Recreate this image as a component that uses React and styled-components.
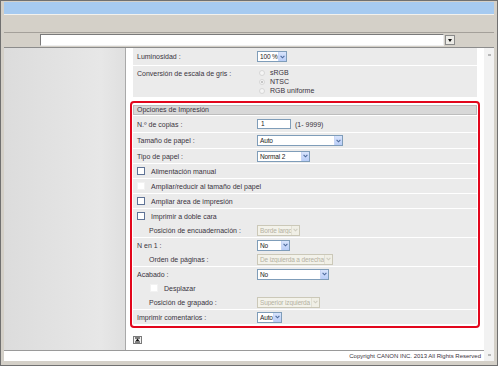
import styled, { createGlobalStyle } from 'styled-components';

const GlobalStyle = createGlobalStyle`
  html, body {
    margin: 0;
    padding: 0;
    background: #ffffff;
  }
  body {
    font-family: 'Liberation Sans', Arial, sans-serif;
  }
`;

const Frame = styled.div`
  width: 498px;
  height: 366px;
  box-sizing: border-box;
  border: 1px solid #707070;
  background: #d4d0c8;
  padding: 1px 3px 4px 3px;
  display: flex;
  flex-direction: column;
  font-size: 7px;
  color: #3a3340;
`;

const TitleBar = styled.div`
  height: 12px;
  background: #a6caf0;
`;

const Toolbar = styled.div`
  height: 19px;
  box-sizing: border-box;
  border-top: 1px solid #f3f1ec;
  border-bottom: 1px solid #a4a09a;
`;

const AddressRow = styled.div`
  height: 14px;
  display: flex;
  align-items: center;
  padding-left: 36px;
  gap: 1px;
`;

const AddressInput = styled.div`
  width: 404px;
  height: 12px;
  box-sizing: border-box;
  background: #ffffff;
  border: 1px solid;
  border-color: #7a7a7a #eeeeee #eeeeee #7a7a7a;
`;

const DropButton = styled.div`
  width: 10px;
  height: 10px;
  box-sizing: border-box;
  border: 1px solid #8a8a8a;
  background: #ecebe6;
  display: flex;
  align-items: center;
  justify-content: center;
  &::after {
    content: '';
    border-left: 2.5px solid transparent;
    border-right: 2.5px solid transparent;
    border-top: 3px solid #111;
  }
`;

const Viewport = styled.div`
  flex: 1;
  display: flex;
  border-top: 1px solid #8c8c8c;
  min-height: 0;
`;

const Page = styled.div`
  flex: 1;
  display: flex;
  flex-direction: column;
`;

const ContentRow = styled.div`
  flex: 1;
  display: flex;
  min-height: 0;
`;

const Sidebar = styled.div`
  width: 121px;
  background: linear-gradient(to right, #dcdcdc, #e7e7e7 80%, #dfdfdf);
  border-right: 1px solid #a9a9a9;
`;

const Main = styled.div`
  flex: 1;
  background: #ffffff;
  padding: 0 4px;
  display: flex;
  flex-direction: column;
`;

const ScrollCol = styled.div`
  width: 10px;
  background: #f2f2f2;
  display: flex;
  flex-direction: column;
  justify-content: space-between;
  align-items: center;
  padding: 6px 0 5px;
`;

const ScrollTick = styled.div`
  width: 3px;
  height: 2px;
  background: #b8b8b8;
`;

const Footer = styled.div`
  height: 11px;
  box-sizing: border-box;
  border-top: 1px solid #9a9a9a;
  background: #ffffff;
  display: flex;
  align-items: center;
  justify-content: flex-end;
  padding-right: 3px;
  font-size: 6px;
  color: #3a3340;
`;

const Row = styled.div`
  margin: 0 3px 1px;
  background: #ebebeb;
  display: flex;
  flex-direction: column;
  padding: ${(p) => p.$pad || '0'};
  min-height: ${(p) => p.$h || 0}px;
  justify-content: center;
`;

const Line = styled.div`
  display: grid;
  grid-template-columns: 120px 1fr;
  align-items: ${(p) => (p.$top ? 'start' : 'center')};
  height: ${(p) => p.$h || 14}px;
  padding-left: 4px;
`;

const Label = styled.span`
  padding-left: ${(p) => p.$indent || 0}px;
  padding-top: ${(p) => p.$offset || 0}px;
  white-space: nowrap;
  line-height: 9px;
`;

const Controls = styled.div`
  display: flex;
  align-items: center;
  gap: 4px;
`;

const CheckLine = styled.div`
  display: flex;
  align-items: center;
  height: 14px;
  padding-left: ${(p) => 4 + (p.$indent || 0)}px;
  gap: 6px;
  white-space: nowrap;
`;

const Check = styled.span`
  width: 8px;
  height: 8px;
  box-sizing: border-box;
  background: #ffffff;
  border: 1px solid ${(p) => (p.$disabled ? '#f2f2f2' : '#5f7396')};
`;

const SelectBox = styled.div`
  width: ${(p) => p.$w}px;
  height: 11px;
  box-sizing: border-box;
  display: flex;
  align-items: center;
  border: 1px solid ${(p) => (p.$disabled ? '#cbc8b8' : '#7f9db9')};
  background: ${(p) => (p.$disabled ? '#f3f2ea' : '#ffffff')};
  color: ${(p) => (p.$disabled ? '#b4b1a2' : '#222')};
  font-size: 6.5px;
  letter-spacing: -0.15px;
  white-space: nowrap;
  overflow: hidden;
`;

const SelectText = styled.span`
  flex: 1;
  padding-left: 2px;
  overflow: hidden;
`;

const Arrow = styled.span`
  width: 7px;
  height: 9px;
  flex: 0 0 7px;
  display: flex;
  align-items: center;
  justify-content: center;
  background: ${(p) => (p.$disabled ? '#f0efe6' : 'linear-gradient(#d8e4fc, #b9cdf7)')};
  border-left: 1px solid ${(p) => (p.$disabled ? '#e2e0d4' : '#c8d6f5')};
`;

const TextInput = styled.div`
  width: 34px;
  height: 10px;
  box-sizing: border-box;
  border: 1px solid #7f9db9;
  background: #ffffff;
  color: #222;
  padding-left: 3px;
  line-height: 8px;
  font-size: 6.5px;
`;

const RadioList = styled.div`
  display: flex;
  flex-direction: column;
`;

const RadioItem = styled.div`
  height: 9px;
  display: flex;
  align-items: center;
  gap: 5px;
  padding-left: 2px;
`;

const Radio = styled.span`
  width: 6px;
  height: 6px;
  box-sizing: border-box;
  border-radius: 50%;
  border: 1px solid #d6d6d6;
  background: #f5f5f5;
  display: flex;
  align-items: center;
  justify-content: center;
  &::after {
    content: '';
    width: 2px;
    height: 2px;
    border-radius: 50%;
    background: ${(p) => (p.$on ? '#b5b5b5' : 'transparent')};
  }
`;

const Options = styled.div`
  margin-top: 3px;
  border: 2px solid #e2061c;
  border-radius: 4px;
  padding: 2px 0 1px;
  display: flex;
  flex-direction: column;
`;

const Header = styled.div`
  margin: 0 1px 1px;
  height: 10px;
  box-sizing: border-box;
  background: #d8d8d8;
  border: 1px solid #bdbdbd;
  padding-left: 3px;
  line-height: 8px;
`;

const OptRow = styled(Row)`
  margin: 0 1px 1px;
`;

const TopLink = styled.div`
  margin: 8px 0 0 3px;
  width: 9px;
  height: 8px;
`;

function Select({ w, value, disabled }) {
  return (
    <SelectBox $w={w} $disabled={disabled}>
      <SelectText>{value}</SelectText>
      <Arrow $disabled={disabled}>
        <svg width="5" height="4" viewBox="0 0 5 4">
          <path d="M0.6 0.8L2.5 2.8L4.4 0.8" fill="none" stroke={disabled ? '#cfcdc0' : '#4d6a9c'} strokeWidth="1.1" />
        </svg>
      </Arrow>
    </SelectBox>
  );
}

function Field({ label, indent, children, h }) {
  return (
    <Line $h={h}>
      <Label $indent={indent}>{label}</Label>
      <Controls>{children}</Controls>
    </Line>
  );
}

export default function App() {
  return (
    <>
      <GlobalStyle />
      <Frame>
        <TitleBar />
        <Toolbar />
        <AddressRow>
          <AddressInput />
          <DropButton />
        </AddressRow>
        <Viewport>
          <Page>
            <ContentRow>
              <Sidebar />
              <Main>
                <Row $h={17}>
                  <Field label="Luminosidad :">
                    <Select w={30} value="100 %" />
                  </Field>
                </Row>
                <Row $pad="2px 0">
                  <Line $h={27} $top>
                    <Label $offset={1}>Conversión de escala de gris :</Label>
                    <RadioList>
                      <RadioItem><Radio />sRGB</RadioItem>
                      <RadioItem><Radio $on />NTSC</RadioItem>
                      <RadioItem><Radio />RGB uniforme</RadioItem>
                    </RadioList>
                  </Line>
                </Row>
                <Options>
                  <Header>Opciones de Impresión</Header>
                  <OptRow>
                    <Field label="N.º de copias :" h={16}>
                      <TextInput>1</TextInput>
                      <span>(1- 9999)</span>
                    </Field>
                  </OptRow>
                  <OptRow>
                    <Field label="Tamaño de papel :" h={15}>
                      <Select w={86} value="Auto" />
                    </Field>
                  </OptRow>
                  <OptRow>
                    <Field label="Tipo de papel :">
                      <Select w={53} value="Normal 2" />
                    </Field>
                  </OptRow>
                  <OptRow>
                    <CheckLine><Check />Alimentación manual</CheckLine>
                  </OptRow>
                  <OptRow>
                    <CheckLine><Check $disabled />Ampliar/reducir al tamaño del papel</CheckLine>
                  </OptRow>
                  <OptRow>
                    <CheckLine><Check />Ampliar área de impresión</CheckLine>
                  </OptRow>
                  <OptRow>
                    <CheckLine><Check />Imprimir a doble cara</CheckLine>
                    <Field label="Posición de encuadernación :" indent={12}>
                      <Select w={43} value="Borde largo" disabled />
                    </Field>
                  </OptRow>
                  <OptRow>
                    <Field label="N en 1 :">
                      <Select w={33} value="No" />
                    </Field>
                    <Field label="Orden de páginas :" indent={12}>
                      <Select w={76} value="De izquierda a derecha" disabled />
                    </Field>
                  </OptRow>
                  <OptRow>
                    <Field label="Acabado :">
                      <Select w={72} value="No" />
                    </Field>
                    <CheckLine $indent={13}><Check $disabled />Desplazar</CheckLine>
                    <Field label="Posición de grapado :" indent={12}>
                      <Select w={63} value="Superior izquierda" disabled />
                    </Field>
                  </OptRow>
                  <OptRow>
                    <Field label="Imprimir comentarios :">
                      <Select w={25} value="Auto" />
                    </Field>
                  </OptRow>
                </Options>
                <TopLink>
                  <svg width="9" height="8" viewBox="0 0 9 8">
                    <rect x="0.5" y="0.5" width="8" height="7" fill="#f2f2f2" stroke="#7a7a7a" />
                    <path d="M2 2h5M2 6h5" stroke="#111" strokeWidth="1" />
                    <path d="M4.5 2.6L2.6 5h3.8z" fill="#111" />
                  </svg>
                </TopLink>
              </Main>
            </ContentRow>
            <Footer>Copyright CANON INC. 2013 All Rights Reserved</Footer>
          </Page>
          <ScrollCol>
            <ScrollTick />
            <ScrollTick />
          </ScrollCol>
        </Viewport>
      </Frame>
    </>
  );
}
